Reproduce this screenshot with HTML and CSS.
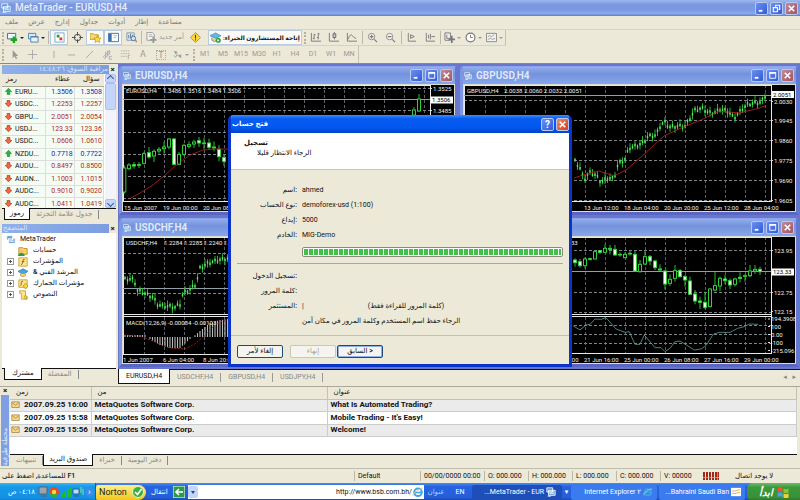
FILE: index.html
```html
<!DOCTYPE html>
<html lang="ar" dir="ltr">
<head>
<meta charset="utf-8">
<title>MetaTrader - EURUSD,H4</title>
<link rel="stylesheet" href="styles.css">
</head>
<body>
<svg class="defs" aria-hidden="true">
  <symbol id="app" viewBox="0 0 12 12"><path d="M1 1h7v5H1zM3 4h8v6H3z" fill="#4d8fd0" stroke="#fff"/><path d="M4 6h6M4 8h6M2 11h4" stroke="#fff"/></symbol>
  <symbol id="plus-chart" viewBox="0 0 12 12"><path d="M.5 1.500h9v6h-9z" fill="#eef5ff" stroke="#35658f"/><path d="M7.500 5v7M4 8.500h7" stroke="#18a818" stroke-width="2.600"/></symbol>
  <symbol id="stack" viewBox="0 0 12 12"><path d="M.5 1.500h8v6h-8z" fill="#d7e8fa" stroke="#4b7daa"/><path d="M3 5h8v6H3z" fill="#e9f3ff" stroke="#4b7daa"/><path d="M3 5.500h8" stroke="#4b7daa"/></symbol>
  <symbol id="watch" viewBox="0 0 12 12"><path d="M1 1h10v10H1z" fill="#fff" stroke="#7aa5d0"/><path d="M3 3h3v3H3z" fill="#24a32c"/><path d="M6 6h3v3H6z" fill="#d33b22"/></symbol>
  <symbol id="target" viewBox="0 0 12 12"><circle cx="6" cy="6" r="3.500" fill="none" stroke="#444"/><path d="M6 0v4M6 8v4M0 6h4M8 6h4" stroke="#444"/></symbol>
  <symbol id="star" viewBox="0 0 12 12"><path d="M0 2h4l1 1h4v5H0z" fill="#f6dd79" stroke="#c29a20"/><path d="M8 4l1.200 2.600 2.800.2-2.100 1.900.7 2.800L8 10l-2.500 1.500.6-2.800L4 6.800l2.800-.2z" fill="#ffe24a" stroke="#b98a12" stroke-width=".7"/></symbol>
  <symbol id="panel" viewBox="0 0 12 12"><path d="M.5 1.500h11v9H.5z" fill="#fff" stroke="#3d6fa8"/><path d="M1 2h3v8H1z" fill="#3d6fa8"/><path d="M6 4h4M6 6h3" stroke="#9dbbe0"/></symbol>
  <symbol id="test" viewBox="0 0 12 12"><path d="M1 1h8v8H1z" fill="#e8f0fa" stroke="#7693b4"/><path d="M3 3v4M5 2v5M7 3v3" stroke="#52708f"/><circle cx="8" cy="7" r="2.500" fill="#cfe5f8" stroke="#52708f"/><path d="M10 9l2 2" stroke="#b68330" stroke-width="1.500"/></symbol>
  <symbol id="order" viewBox="0 0 12 12"><path d="M1 .5h6l2 2V9H1z" fill="#f5f5f0" stroke="#999"/><path d="M3 3h4M3 5h4" stroke="#aaa"/><path d="M8 5v7M4.500 8.500h7" stroke="#999" stroke-width="2"/></symbol>
  <symbol id="warn" viewBox="0 0 12 12"><path d="M6 .5L11.500 6 6 11.500.5 6z" fill="#ffd73c" stroke="#c69214"/><path d="M6 3v4M6 8v1.300" stroke="#54400a" stroke-width="1.200"/></symbol>
  <symbol id="expert" viewBox="0 0 12 12"><path d="M0 4l6-3 6 3-6 3z" fill="#66b5e6" stroke="#2d7eb5" stroke-width=".7"/><path d="M2 6v3q3 3 6 0" fill="#f4cf74" stroke="#2d7eb5" stroke-width=".7"/><circle cx="9" cy="9" r="2.800" fill="#29a338"/><path d="M8 7.500v3l2.500-1.500z" fill="#fff"/></symbol>
  <symbol id="advisor" viewBox="0 0 12 12"><path d="M0 4l6-3 6 3-6 4z" fill="#4ba3e0" stroke="#2a74b4" stroke-width=".7"/><path d="M3 7v2q3 3 6 0V7" fill="#f4cf74" stroke="#a5843a" stroke-width=".7"/></symbol>
  <symbol id="bars" viewBox="0 0 12 12"><path d="M1.500 1v9H12M4.500 2v6M3 7h1.500M4.500 3H6M9 1v7M7.500 6H9M9 2h1.500" fill="none" stroke="#777"/></symbol>
  <symbol id="candle" viewBox="0 0 12 12"><path d="M1.500 1v9H12M7 0v8" fill="none" stroke="#777"/><path d="M5.500 2h3v4h-3z" fill="#ccc" stroke="#666"/></symbol>
  <symbol id="line" viewBox="0 0 12 12"><path d="M1.500 1v9H12M2 8q3-7 5-4t4 3" fill="none" stroke="#777"/></symbol>
  <symbol id="zin" viewBox="0 0 12 12"><circle cx="5" cy="5" r="3.500" fill="#f5f5f5" stroke="#888"/><path d="M3 5h4M5 3v4M8 8l3 3" stroke="#777" stroke-width="1.200"/></symbol>
  <symbol id="zout" viewBox="0 0 12 12"><circle cx="5" cy="5" r="3.500" fill="#f5f5f5" stroke="#888"/><path d="M3 5h4M8 8l3 3" stroke="#777" stroke-width="1.200"/></symbol>
  <symbol id="scroll" viewBox="0 0 12 12"><path d="M2.500 1v9H11M5 3v4l4-2z" fill="none" stroke="#777"/></symbol>
  <symbol id="shift" viewBox="0 0 12 12"><path d="M2.500 1v9H12M7 2v6M8 5h4M5 3v4" fill="none" stroke="#777"/></symbol>
  <symbol id="indic" viewBox="0 0 12 12"><path d="M1 1h6v8H1z" fill="#eee" stroke="#777"/><path d="M3 3v4h3" fill="none" stroke="#777"/><path d="M8.500 4v8M5 8h7" stroke="#777" stroke-width="1.800"/></symbol>
  <symbol id="clock" viewBox="0 0 12 12"><circle cx="6" cy="6" r="4.800" fill="#fff" stroke="#777" stroke-width="1.300"/><path d="M6 3v3h2.500" fill="none" stroke="#777"/></symbol>
  <symbol id="templ" viewBox="0 0 12 12"><path d="M.5 1.500h11v9H.5z" fill="#f2f2ee" stroke="#888"/><path d="M2 5l2-1 2 1 3-2M2 8l3-1 2 1 3-1" fill="none" stroke="#999"/></symbol>
  <symbol id="cursor" viewBox="0 0 12 12"><path d="M4 1v9l2-2 1.500 3 1.500-.7L7.500 7.500H10z" fill="#999"/></symbol>
  <symbol id="cross" viewBox="0 0 12 12"><path d="M6 1v10M1 6h10" stroke="#aaa"/></symbol>
  <symbol id="vline" viewBox="0 0 12 12"><path d="M6.500 2v8" stroke="#aaa"/></symbol>
  <symbol id="hline" viewBox="0 0 12 12"><path d="M2 6.500h8" stroke="#aaa"/></symbol>
  <symbol id="slash" viewBox="0 0 12 12"><path d="M2 10l8-8" stroke="#aaa"/></symbol>
  <symbol id="chan" viewBox="0 0 12 12"><path d="M1 9l7-7M2 11l7-7M4 3v7M6 2v6M8 1v5M8 8h3M8 8v3h3" fill="none" stroke="#aaa"/></symbol>
  <symbol id="fibo" viewBox="0 0 12 12"><path d="M1 2h10M1 5h10M1 8h7" stroke="#aaa" stroke-dasharray="1.500 1"/><path d="M9 11V7h2" fill="none" stroke="#aaa"/></symbol>
  <symbol id="arrows" viewBox="0 0 12 12"><path d="M2 2l4 1-2 3zM6 7l4-1v4z" fill="#999"/><path d="M2 7l2 2 2-4" fill="none" stroke="#999"/></symbol>
  <symbol id="up" viewBox="0 0 8 8"><path d="M4 .3L7.500 4H5.500v3.500h-3V4H.5z" fill="#26b53a" stroke="#0c7a1c" stroke-width=".6"/></symbol>
  <symbol id="down" viewBox="0 0 8 8"><path d="M4 7.700L7.700 4 5.500 3.300V.5h-3v2.800L.3 4z" fill="#f06a3e" stroke="#a92c12" stroke-width=".8"/></symbol>
  <symbol id="mail" viewBox="0 0 12 12"><path d="M1 2.500h10v7.500H1z" fill="#f5d789" stroke="#a5843a"/><path d="M1.500 3.500L6 7l4.500-3.500" fill="none" stroke="#a5843a"/></symbol>
  <symbol id="folder" viewBox="0 0 12 12"><path d="M1 2h5l1 1h4v7H1z" fill="#f8d264" stroke="#b78a1e"/><circle cx="4" cy="7" r="2" fill="#f1b882"/><path d="M0 12q0-3.500 4-3.500T8 12z" fill="#22a43a"/></symbol>
  <symbol id="func" viewBox="0 0 12 12"><path d="M1 1h10v10H1z" fill="#ffe68a" stroke="#c09a3a"/><path d="M8 3q-2-1-2 1.500T4 9.500M4.500 5.500h3" fill="none" stroke="#72581a"/></symbol>
  <symbol id="custom" viewBox="0 0 12 12"><path d="M1 1h10v9H1z" fill="#ffe68a" stroke="#c09a3a"/><path d="M6 3q-2-1-2 1.500T3 8" fill="none" stroke="#72581a"/><path d="M9 5l3 3.500L9 12 6 8.500z" fill="#ffd130" stroke="#b08010" stroke-width=".7"/></symbol>
  <symbol id="script" viewBox="0 0 12 12"><path d="M2 1h7v7h2v3H4V4H2z" fill="#ffe68a" stroke="#c09a3a"/><path d="M9 6l2 2.500L9 11 7 8.500z" fill="#ffd130" stroke="#b08010" stroke-width=".7"/></symbol>
  <symbol id="ie" viewBox="0 0 12 12"><circle cx="6" cy="6.300" r="3.800" fill="none" stroke="#3aa5ee" stroke-width="2"/><path d="M3 6.500h6.500" stroke="#3aa5ee" stroke-width="1.600"/><path d="M1 10Q0 6 11 2" fill="none" stroke="#e8cf72" stroke-width=".9"/></symbol>
  <symbol id="min" viewBox="0 0 12 12"><path d="M3 8.500h4" stroke="#fff" stroke-width="2"/></symbol>
  <symbol id="max" viewBox="0 0 12 12"><path d="M3 3.500h6.500V9H3z" fill="none" stroke="#fff"/><path d="M2.500 3h7.500" stroke="#fff" stroke-width="1.600"/></symbol>
  <symbol id="rest" viewBox="0 0 12 12"><path d="M5 4V2.500h4.500V7H8M2.500 5H7v4.500H2.500z" fill="none" stroke="#fff" stroke-width="1.200"/></symbol>
  <symbol id="close" viewBox="0 0 12 12"><path d="M3 3l6 6M9 3L3 9" stroke="#fff" stroke-width="1.700"/></symbol>
</svg>

<header class="titlebar">
  <svg class="ico10"><use href="#app"/></svg>
  <h1>MetaTrader - EURUSD,H4</h1>
  <div class="winbtns">
    <button class="wb" aria-label="Minimize"><svg><use href="#min"/></svg></button>
    <button class="wb" aria-label="Restore"><svg><use href="#rest"/></svg></button>
    <button class="wb red" aria-label="Close"><svg><use href="#close"/></svg></button>
  </div>
</header>

<nav class="menu">
  <a href="#">ملف</a><a href="#">عرض</a><a href="#">إدارج</a><a href="#">جداول</a><a href="#">أدوات</a><a href="#">إطار</a><a href="#">مساعدة</a>
</nav>

<div class="tools">
  <div class="bar">
    <i class="grip"></i>
    <button class="t drop" aria-label="New chart"><svg><use href="#plus-chart"/></svg></button>
    <button class="t drop" aria-label="Profiles"><svg><use href="#stack"/></svg></button>
    <i class="sep"></i>
    <button class="t on" aria-label="Market watch"><svg><use href="#watch"/></svg></button>
    <button class="t" aria-label="Data window"><svg><use href="#target"/></svg></button>
    <button class="t on" aria-label="Navigator"><svg><use href="#star"/></svg></button>
    <button class="t on" aria-label="Terminal"><svg><use href="#panel"/></svg></button>
    <button class="t" aria-label="Tester"><svg><use href="#test"/></svg></button>
    <i class="sep"></i>
    <button class="t text off"><svg><use href="#order"/></svg><span>أمر جديد</span></button>
    <button class="t" aria-label="Editor"><svg><use href="#warn"/></svg></button>
    <button class="t text on wide"><svg><use href="#expert"/></svg><span dir="rtl">إتاحة المستشارون الخبراء:</span></button>
    <i class="grip"></i>
    <button class="t" aria-label="Bars"><svg><use href="#bars"/></svg></button>
    <button class="t" aria-label="Candles"><svg><use href="#candle"/></svg></button>
    <button class="t" aria-label="Line"><svg><use href="#line"/></svg></button>
    <i class="sep"></i>
    <button class="t" aria-label="Zoom in"><svg><use href="#zin"/></svg></button>
    <button class="t" aria-label="Zoom out"><svg><use href="#zout"/></svg></button>
    <i class="sep"></i>
    <button class="t" aria-label="Auto scroll"><svg><use href="#scroll"/></svg></button>
    <button class="t" aria-label="Shift"><svg><use href="#shift"/></svg></button>
    <i class="sep"></i>
    <button class="t drop off" aria-label="Indicators"><svg><use href="#indic"/></svg></button>
    <button class="t drop off" aria-label="Periods"><svg><use href="#clock"/></svg></button>
    <button class="t drop off" aria-label="Templates"><svg><use href="#templ"/></svg></button>
  </div>
  <div class="bar">
    <i class="grip"></i>
    <button class="t" aria-label="Cursor"><svg><use href="#cursor"/></svg></button>
    <button class="t" aria-label="Crosshair"><svg><use href="#cross"/></svg></button>
    <i class="sep none"></i>
    <button class="t" aria-label="Vertical line"><svg><use href="#vline"/></svg></button>
    <button class="t" aria-label="Horizontal line"><svg><use href="#hline"/></svg></button>
    <button class="t" aria-label="Trend line"><svg><use href="#slash"/></svg></button>
    <button class="t" aria-label="Channel"><svg><use href="#chan"/></svg></button>
    <button class="t" aria-label="Fibonacci"><svg><use href="#fibo"/></svg></button>
    <button class="t glyph">A</button>
    <button class="t glyph"><span class="boxed">T</span></button>
    <button class="t drop off" aria-label="Arrows"><svg><use href="#arrows"/></svg></button>
    <i class="grip"></i>
    <button class="t p">M1</button><button class="t p">M5</button><button class="t p">M15</button><button class="t p">M30</button><button class="t p">H1</button><button class="t p">H4</button><button class="t p">D1</button><button class="t p">W1</button><button class="t p">MN</button>
  </div>
</div>

<main class="work">
  <aside class="side">
    <section class="panel market">
      <div class="cap"><h2 dir="rtl">مراقبة السوق: ١٤:٤٨:٢٦</h2><button aria-label="Close panel">×</button></div>
      <div class="list">
        <div class="rows">
        <table>
          <thead><tr><th>رمز</th><th>عطاء</th><th>سؤال</th></tr></thead>
          <tbody>
            <tr class="u"><td><svg><use href="#up"/></svg>EURU...</td><td>1.3506</td><td>1.3508</td></tr>
            <tr><td><svg><use href="#down"/></svg>USDC...</td><td>1.2253</td><td>1.2257</td></tr>
            <tr><td><svg><use href="#down"/></svg>GBPU...</td><td>2.0051</td><td>2.0054</td></tr>
            <tr><td><svg><use href="#down"/></svg>USDJ...</td><td>123.33</td><td>123.36</td></tr>
            <tr><td><svg><use href="#down"/></svg>USDC...</td><td>1.0606</td><td>1.0610</td></tr>
            <tr class="u"><td><svg><use href="#up"/></svg>NZDU...</td><td>0.7718</td><td>0.7722</td></tr>
            <tr><td><svg><use href="#down"/></svg>AUDU...</td><td>0.8497</td><td>0.8500</td></tr>
            <tr><td><svg><use href="#down"/></svg>AUDN...</td><td>1.1003</td><td>1.1015</td></tr>
            <tr><td><svg><use href="#down"/></svg>AUDC...</td><td>0.9010</td><td>0.9020</td></tr>
            <tr><td><svg><use href="#down"/></svg>AUDC...</td><td>1.0411</td><td>1.0419</td></tr>
          </tbody>
        </table>
        </div>
        <div class="scroll"><button class="sb up" aria-label="Scroll up"></button><span class="thumb"></span><button class="sb dn" aria-label="Scroll down"></button></div>
      </div>
      <div class="tabs"><a class="sel" href="#">رموز</a><a href="#">جدول علامة التجزئة</a></div>
    </section>
    <section class="panel nav">
      <div class="cap"><h2 dir="rtl">المتصفح</h2><button aria-label="Close panel">×</button></div>
      <ul class="tree">
        <li><svg><use href="#app"/></svg>MetaTrader</li>
        <li class="sub leaf"><i></i><svg><use href="#folder"/></svg>حسابات</li>
        <li class="sub"><i></i><svg><use href="#func"/></svg>المؤشرات</li>
        <li class="sub"><i></i><svg><use href="#advisor"/></svg><span dir="rtl">المرشد الفني &amp;</span></li>
        <li class="sub"><i></i><svg><use href="#custom"/></svg>مؤشرات الجمارك</li>
        <li class="sub"><i></i><svg><use href="#script"/></svg>النصوص</li>
      </ul>
      <div class="tabs"><a class="sel big" href="#">مشترك</a><a href="#">المفضلة</a></div>
    </section>
  </aside>

  <div class="desk">
    <div class="grid">
      <section class="win"><div class="wt"><svg class="ico8"><use href="#app"/></svg><h2>EURUSD,H4</h2><div class="winbtns"><button class="wb" aria-label="Minimize"><svg><use href="#min"/></svg></button><button class="wb" aria-label="Maximize"><svg><use href="#max"/></svg></button><button class="wb red" aria-label="Close"><svg><use href="#close"/></svg></button></div></div><svg class="chart" id="c1" viewBox="122 84 333 128"></svg></section>
      <section class="win"><div class="wt"><svg class="ico8"><use href="#app"/></svg><h2>GBPUSD,H4</h2><div class="winbtns"><button class="wb" aria-label="Minimize"><svg><use href="#min"/></svg></button><button class="wb" aria-label="Maximize"><svg><use href="#max"/></svg></button><button class="wb red" aria-label="Close"><svg><use href="#close"/></svg></button></div></div><svg class="chart" id="c2" viewBox="462 84 333 128"></svg></section>
      <section class="win"><div class="wt"><svg class="ico8"><use href="#app"/></svg><h2>USDCHF,H4</h2><div class="winbtns"><button class="wb" aria-label="Minimize"><svg><use href="#min"/></svg></button><button class="wb" aria-label="Maximize"><svg><use href="#max"/></svg></button><button class="wb red" aria-label="Close"><svg><use href="#close"/></svg></button></div></div><svg class="chart" id="c3" viewBox="122 236 333 128"></svg></section>
      <section class="win"><div class="wt"><svg class="ico8"><use href="#app"/></svg><h2>USDJPY,H4</h2><div class="winbtns"><button class="wb" aria-label="Minimize"><svg><use href="#min"/></svg></button><button class="wb" aria-label="Maximize"><svg><use href="#max"/></svg></button><button class="wb red" aria-label="Close"><svg><use href="#close"/></svg></button></div></div><svg class="chart" id="c4" viewBox="462 236 333 128"></svg></section>
    </div>
    <div class="tabs charts"><a class="sel" href="#">EURUSD,H4</a><a href="#">USDCHF,H4</a><a href="#">GBPUSD,H4</a><a href="#">USDJPY,H4</a><span class="arr">◂ ▸</span></div>
  </div>
</main>

<section class="terminal">
  <div class="strip"><button aria-label="Close terminal">×</button><h2>محطة طرفية</h2></div>
  <div class="tbody">
    <div class="mailbox">
    <table>
      <thead><tr><th class="c1">زمن</th><th class="c2">من</th><th>عنوان</th></tr></thead>
      <tbody>
        <tr><td><svg><use href="#mail"/></svg>2007.09.25 16:00</td><td>MetaQuotes Software Corp.</td><td>What Is Automated Trading?</td></tr>
        <tr><td><svg><use href="#mail"/></svg>2007.09.25 15:58</td><td>MetaQuotes Software Corp.</td><td>Mobile Trading - It's Easy!</td></tr>
        <tr><td><svg><use href="#mail"/></svg>2007.09.25 15:56</td><td>MetaQuotes Software Corp.</td><td>Welcome!</td></tr>
      </tbody>
    </table>
    </div>
    <div class="tabs"><a href="#">تنبيهات</a><a class="sel" href="#">صندوق البريد</a><a href="#">خبراء</a><a href="#">دفتر اليومية</a></div>
  </div>
</section>

<footer class="status">
  <span class="help">للمساعدة, اضغط على F1</span><span class="s1">Default</span><span class="s2">00/00/0000 00:00</span><span class="s3">O: 000.000</span><span class="s3">H: 000.000</span><span class="s3">L: 000.000</span><span class="s3">C: 000.000</span><span class="s3">V: 00000</span>
  <span class="conn"><svg viewBox="0 0 16 8"><path d="M1 0v8M4 0v8M7 0v8M10 0v8M13 0v8M15.500 0v8" stroke="#a02818" stroke-width="2"/><path d="M0 5.500h16" stroke="#e0a898" stroke-width=".7"/></svg>لا يوجد اتصال</span>
</footer>

<nav class="task">
  <div class="tray"><span dir="rtl">٠٤:١٨ ص</span>
    <svg viewBox="0 0 46 12"><path d="M1 1h8v7H1zM3 10h6" fill="#9aa4ac" stroke="#5a6268"/><circle cx="16" cy="6" r="5" fill="#e84a28"/><path d="M16 6L11 8a5 5 0 0 0 9 1z" fill="#3aa83a"/><circle cx="16" cy="6" r="2.200" fill="#f6d84a"/><path d="M24 11V8M27 11V6M30 11V3M32.500 11V1" stroke="#1fbf2a" stroke-width="2"/><path d="M35 3h6v5h-6zM36 10h5" fill="#bfe0fa" stroke="#2a5c9c"/><path d="M43 1v6M45 3v6" stroke="#7fe88a"/></svg>
    <button class="chev" aria-label="Hide icons">›</button>
  </div>
  <button class="norton">Norton<svg viewBox="0 0 12 12"><circle cx="6" cy="6" r="5.500" fill="#3fae3c" stroke="#e6f3c8"/><path d="M3 6l2.500 2.500L9.500 3" fill="none" stroke="#fff" stroke-width="1.600"/></svg></button>
  <button class="go">انتقال<svg viewBox="0 0 12 12"><path d="M0 0h12v12H0z" fill="#2c9c46" stroke="#fff"/><path d="M10 6H3M6 3L3 6l3 3" fill="none" stroke="#fff" stroke-width="1.600"/></svg></button>
  <div class="addr"><button aria-label="Show addresses"></button><input aria-label="عنوان" value="http://www.bsb.com.bh/"><svg><use href="#ie"/></svg></div>
  <span class="albl">عنوان</span>
  <span class="lang">EN</span>
  <button class="tb cur"><span>...MetaTrader - EUR</span><svg><use href="#app"/></svg></button>
  <span class="more">▾</span>
  <button class="tb"><span>Internet Explorer ٢</span><svg><use href="#ie"/></svg></button>
  <button class="tb"><span>...Bahraini Saudi Ban</span><svg viewBox="0 0 12 12"><path d="M0 1h12v10H0z" fill="#fff"/><path d="M1 5q5 0 10-2M1 8q5 0 10-2" fill="none" stroke="#e6a53c"/></svg></button>
  <button class="start">ابدأ<svg viewBox="0 0 12 12"><path d="M1 2q2-1.500 4.500 0v4Q3 4.500 1 6z" fill="#f0582a"/><path d="M6.500 2.500q2.500 1.500 5 0v4q-2.500 1.500-5 0z" fill="#86c440"/><path d="M.5 7q2.500-1.500 5 0v4q-2.500-1.500-5 0z" fill="#4f9cf0"/><path d="M6.500 7.500q2.500 1.500 5 0v4q-2.500 1.500-5 0z" fill="#fbd02e"/></svg></button>
</nav>

<div class="dialog" role="dialog" aria-labelledby="dt">
  <div class="dcap"><h2 id="dt">فتح حساب</h2><button class="wb" aria-label="Help">?</button><button class="wb hot" aria-label="Close"><svg><use href="#close"/></svg></button></div>
  <div class="dhead"><h3>تسجيل</h3><p>الرجاء الانتظار قليلا</p></div>
  <dl class="info">
    <dt>اسم:</dt><dd>ahmed</dd>
    <dt>نوع الحساب:</dt><dd>demoforex-usd (1:100)</dd>
    <dt>إيداع:</dt><dd>5000</dd>
    <dt>الخادم:</dt><dd>MIG-Demo</dd>
  </dl>
  <div class="prog" role="progressbar" aria-label="Progress"><span></span></div>
  <dl class="info low">
    <dt>تسجيل الدخول:</dt><dd></dd>
    <dt>كلمة المرور:</dt><dd></dd>
    <dt>المستثمر:</dt><dd class="split"><span>|</span><span>(كلمة المرور للقراءة فقط)</span></dd>
    <dt></dt><dd>الرجاء حفظ اسم المستخدم وكلمة المرور في مكان آمن</dd>
  </dl>
  <div class="dbtns"><button>إلغاء لأمر</button><button disabled>إنهاء</button><button class="def">السابق &gt;</button></div>
</div>
<script src="charts.js"></script>
</body>
</html>
```
FILE: styles.css
```css
* { box-sizing: border-box; }
body {
  margin: 0; min-height: 100vh; display: flex; flex-direction: column; position: relative;
  background: #ece9d8; color: #111; font: 7px/9px Roboto, "DejaVu Sans", sans-serif; overflow: hidden;
}
h1, h2, h3, p, ul, dl, dd { margin: 0; padding: 0; font: inherit; }
button, input { font: inherit; color: inherit; margin: 0; padding: 0; border: 0; background: none; }
a { color: inherit; text-decoration: none; }
svg { display: block; flex: none; width: 12px; height: 12px; }
.defs { position: absolute; width: 0; height: 0; }

.titlebar { height: 16px; display: flex; align-items: center; gap: 4px; padding: 0 2px 0 1px; background: linear-gradient(#9db9ee, #7a96df 30%, #7b99e1 60%, #86a9ec 85%, #5f79cf); color: #e4ecfb; }
.titlebar h1 { flex: 1; font-size: 10px; line-height: 14px; font-weight: 500; }
.titlebar .ico10 { width: 10px; height: 10px; }
.winbtns { display: flex; gap: 2px; }
.wb { width: 13px; height: 13px; border: 1px solid #b9c8f3; border-radius: 2px; background: linear-gradient(135deg, #6d8ff0, #2f5bd6); display: flex; align-items: center; justify-content: center; color: #fff; }
.wb svg { width: 11px; height: 11px; }
.wb.red { background: linear-gradient(135deg, #c08a98, #a5525e); }

.menu { height: 14px; display: flex; align-items: center; gap: 10px; padding: 0 5px; color: #777; border-bottom: 1px solid #d8d5c8; }
.tools { height: 34px; border-bottom: 1px solid #8d8a7c; }
.bar { display: flex; align-items: center; width: max-content; height: 16px; border-right: 1px solid #c5c2b2; border-bottom: 1px solid #d6d3c4; }
.bar + .bar { height: 17px; border-bottom: 0; }
.grip { width: 2px; height: 12px; margin: 0 1px 0 2px; border-left: 2px dotted #b5b2a2; }
.sep { width: 1px; height: 13px; margin: 0 1px; background: #bbb8a8; }
.sep.none { background: none; }
.t { width: 18px; height: 15px; display: flex; align-items: center; justify-content: center; gap: 2px; color: #999; }
.t svg { width: 11px; height: 11px; }
.t.on { background: #fbfaf6; border: 1px solid #b9cbe0; }
.t.drop { width: 21px; }
.t.drop::after { content: ""; border: 2px solid transparent; border-top-color: #222; border-bottom: 0; }
.t.drop.off::after { border-top-color: #999; }
.t.text { width: auto; padding: 0 3px; }
.t.text.wide { color: #111; font-weight: 700; font-size: 6px; width: 94px; margin-left: 3px; white-space: nowrap; }
.t.glyph { font-size: 9px; }
.boxed { border: 1px dotted #aaa; line-height: 8px; padding: 0 1px; }

.work { flex: none; display: flex; }
.side { width: 118px; flex: none; display: flex; flex-direction: column; gap: 5px; padding: 1px 2px 0; }
.cap { display: flex; height: 9px; }
.cap h2 { width: 107px; padding: 0 1px; background: linear-gradient(90deg, #8fb0ea, #7c9ee0); color: #dbe6fa; text-align: right; overflow: hidden; white-space: nowrap; line-height: 9px; }
.nav .cap h2 { text-align: left; direction: ltr; }
.cap button { width: 7px; font-weight: 700; font-size: 8px; line-height: 8px; }
.market .list { height: 134px; display: flex; background: #fff; overflow: hidden; }
.rows { flex: 1; overflow: hidden; }
.market table { width: 102px; border-collapse: collapse; table-layout: fixed; height: 137px; }
.market th { height: 12px; padding: 0 4px; font-weight: 500; background: #ece9d8; border-bottom: 1px solid #aca899; text-align: right; }
.market th:first-child { width: 43px; text-align: left; }
.market td { padding: 0 1px 0 0; border: 1px solid #ddd; border-left: 0; background: #f4fcf4; color: #b02828; text-align: right; }
.market td:first-child { color: #111; text-align: left; white-space: nowrap; }
.market .u td + td { color: #1c1cb8; }
.market td svg { display: inline-block; width: 7px; height: 7px; margin: 0 3px; vertical-align: -1px; }
.scroll { width: 11px; background: #f3f3fb; display: flex; flex-direction: column; }
.sb { height: 9px; border-radius: 2px; background: #c4d5fb; border: 1px solid #aabff0; display: flex; align-items: center; justify-content: center; }
.sb::after { content: ""; width: 4px; height: 4px; border: solid #3b568c; border-width: 1px 0 0 1px; transform: rotate(45deg); }
.sb.dn::after { transform: rotate(225deg); }
.sb.dn { margin-top: auto; }
.thumb { height: 27px; background: #c4d5fb; border: 1px solid #aabff0; border-radius: 2px; }
.tabs { display: flex; height: 11px; border-top: 1px solid #111; padding-left: 2px; color: #888; line-height: 9px; white-space: nowrap; }
.tabs a { padding: 0 6px; align-self: center; border-right: 1px solid #888; }
.tabs .sel { background: #fff; color: #111; border: 1px solid #111; border-top: 0; align-self: flex-start; margin-top: -1px; padding: 1px 5px; }
.tabs .sel.big { padding: 1px 7px; }
.tree { list-style: none; height: 135px; background: #fff; padding: 1px 4px; font-weight: 500; }
.tree li { display: flex; align-items: center; gap: 4px; height: 11px; }
.tree li svg { width: 10px; height: 10px; }
.tree .sub { padding-left: 2px; gap: 5px; }
.tree li:first-child { font-weight: 400; }
.tree i { width: 5px; height: 5px; background: linear-gradient(#555, #555) center / 3px 1px no-repeat, linear-gradient(#555, #555) center / 1px 3px no-repeat; outline: 1px solid #999; }
.tree .leaf i { visibility: hidden; }

.desk { flex: 1; min-width: 0; background: #6a76cc; display: flex; flex-direction: column; }
.grid { display: grid; grid-template-columns: 1fr 1fr; gap: 3px 2px; padding: 2px 1px; }
.win { border: 3px solid #6f8bde; border-top-width: 1px; border-color: #8ba4ea #6478cf #5a66c4 #7d95e2; border-radius: 4px 4px 0 0; background: #7b98e2; min-width: 0; }
.wt { display: flex; align-items: center; height: 17px; gap: 4px; padding: 0 2px 0 1px; background: linear-gradient(#93aeec, #7592dd 40%, #85a7eb); color: #dfe8fb; }
.wt h2 { flex: 1; font-size: 10px; line-height: 14px; font-weight: 700; }
.ico8 { width: 8px; height: 8px; }
.chart { width: 100%; height: auto; background: #000; outline: 1px solid #dcdcd0; outline-offset: -1px; }
.chart text { font: 6px Roboto, sans-serif; fill: #f2f2f2; }
.tabs.charts { height: 15px; border-top: 1px solid #111; background: #ece9d8; padding-left: 0; }
.charts a { padding: 0 7px; border-right-color: #999; }
.charts .sel { padding: 3px 7px 2px; }
.arr { margin-left: auto; padding-right: 4px; word-spacing: 4px; align-self: center; }

.terminal { height: 83px; display: flex; margin-top: 2px; border-top: 1px solid #aca899; border-bottom: 1px solid #c0bdae; padding-bottom: 2px; }
.strip { width: 10px; display: flex; flex-direction: column; align-items: center; padding: 0 1px; }
.strip button { font-weight: 700; font-size: 8px; line-height: 8px; }
.strip h2 { flex: 1; width: 8px; background: #7f9fe2; color: #dbe6fa; writing-mode: vertical-rl; transform: rotate(180deg); line-height: 8px; white-space: nowrap; overflow: hidden; }
.tbody { flex: 1; display: flex; flex-direction: column; padding-right: 3px; min-width: 0; }
.mailbox { flex: 1; background: #fff; }
.mailbox table { width: 100%; height: 50px; border-collapse: collapse; table-layout: fixed; }
.mailbox th { height: 12px; padding: 0 6px; text-align: left; font-weight: 500; background: #ece9d8; border: 1px solid #c5c2b2; border-left: 0; border-top: 0; }
.c1 { width: 81px; } .c2 { width: 236px; }
.mailbox td { height: 12px; padding: 0 3px; font: 700 8px/10px Roboto, sans-serif; border: 1px solid #ccc; border-width: 0 1px 1px 0; white-space: nowrap; }
.mailbox tr:nth-child(odd) td { background: #ebebeb; }
.mailbox td svg { display: inline-block; width: 9px; height: 9px; margin: 0 4px 0 -2px; vertical-align: -2px; }
.terminal .tabs { height: 12px; padding-left: 0; }

.status { height: 14px; display: flex; align-items: center; white-space: nowrap; }
.status span { padding: 0 3px; border-left: 1px solid #bbb8a8; line-height: 10px; }
.status .help { width: 354px; border: 0; padding: 0 2px; font-weight: 500; }
.s1 { width: 66px; } .s2 { width: 64px; } .s3 { width: 44px; }
.status .s3:nth-of-type(8) { width: 40px; }
.status .conn { border: 0; display: flex; align-items: center; gap: 16px; font-weight: 500; }
.conn svg { width: 16px; height: 8px; }

.task { height: 18px; margin-top: auto; display: flex; align-items: center; color: #fff; white-space: nowrap; background: linear-gradient(#4a8cf0, #2663e0 20%, #245edb 80%, #1941a5); }
.tray { width: 96px; height: 100%; display: flex; align-items: center; gap: 3px; padding-left: 8px; background: linear-gradient(#3fb4f4, #169ae8 20%, #1290e4 85%, #0c6cc0); border-right: 1px solid #0d58b8; }
.tray svg { width: 46px; height: 12px; }
.chev { width: 9px; height: 9px; border-radius: 50%; background: #3b8bee; line-height: 7px; font-size: 9px; margin-left: -2px; flex: none; }
.norton { width: 50px; height: 15px; display: flex; align-items: center; justify-content: space-between; padding: 0 2px 0 3px; border-radius: 2px 8px 8px 2px; background: linear-gradient(#fff088, #f2c61c); color: #222; font-size: 9px; }
.go { margin-left: 5px; width: 34px; display: flex; align-items: center; justify-content: space-between; }
.addr { flex: 1; height: 14px; margin-left: 3px; background: #fff; color: #111; display: flex; align-items: center; }
.addr button { width: 10px; height: 12px; background: #c4d5fb; border-radius: 2px; display: flex; align-items: center; justify-content: center; }
.addr button::after { content: ""; border: 2px solid transparent; border-top: 3px solid #2b467c; border-bottom: 0; }
.addr input { flex: 1; min-width: 0; text-align: right; outline: 0; }
.albl { width: 24px; text-align: center; color: #b9cdf5; }
.lang { width: 24px; text-align: center; }
.tb { width: 86px; height: 15px; display: flex; align-items: center; justify-content: flex-end; gap: 2px; padding: 0 4px; margin-right: 2px; background: #3b7bf0; border-radius: 2px; }
.tb svg { width: 10px; height: 10px; }
.tb.cur { width: 90px; background: #1e4fb8; padding-right: 6px; margin: 0; }
.more { width: 9px; text-align: center; }
.start { width: 53px; height: 100%; display: flex; align-items: center; justify-content: center; gap: 4px; border-radius: 6px 0 0 6px; background: linear-gradient(#6cbc6c, #3c983c 25%, #379137 80%, #2a6e2a); font-size: 10px; font-style: italic; font-weight: 700; }

.dialog { position: absolute; top: 115px; left: 0; right: 0; margin: auto; width: 344px; background: #ece9d8; border: solid #0a35c8; border-width: 0 3px 3px; border-radius: 5px 5px 0 0; overflow: hidden; }
.dcap { height: 18px; display: flex; align-items: center; gap: 2px; margin: 0 -3px; padding: 0 3px 0 4px; background: linear-gradient(#3d8cff, #0a5cf0 20%, #0058ee 70%, #0044cc); color: #fff; }
.dcap h2 { flex: 1; font-weight: 700; }
.dcap .wb { font-size: 10px; font-weight: 700; }
.dcap .hot { background: linear-gradient(135deg, #f08a68, #d0401c); }
.dhead { height: 37px; padding: 6px 0 0 13px; background: #fff; border-bottom: 1px solid #c9c6b8; }
.dhead h3 { font-weight: 700; line-height: 9px; }
.dhead p { padding-left: 13px; line-height: 10px; font-weight: 500; }
.info { display: grid; grid-template-columns: 66px 1fr; column-gap: 5px; grid-auto-rows: 15px; align-items: center; padding-top: 13px; }
.info dt { text-align: right; font-weight: 500; white-space: nowrap; }
.info dd { white-space: nowrap; }
.split { display: flex; gap: 64px; }
.prog { height: 10px; margin: 4px 6px 0 71px; border: 1px solid #8a8a80; border-radius: 2px; background: #fff; padding: 1px; }
.prog span { display: block; height: 6px; background: repeating-linear-gradient(90deg, #42c04a 0 4px, #e8f8e8 4px 5px); }
.low { margin: 6px 6px 0; border-top: 1px solid #aca899; padding: 5px 0 6px; grid-template-columns: 60px 1fr; }
.dbtns { display: flex; padding: 9px 6px 6px; border-top: 1px solid #c5c2b2; }
.dbtns button { width: 46px; height: 13px; background: #f5f4ee; border: 1px solid #1c4a80; border-radius: 2px; font-weight: 500; line-height: 9px; }
.dbtns button:disabled { margin: 0 1px 0 7px; border-color: #c9c7ba; color: #a8a697; }
.dbtns .def { box-shadow: inset 0 0 0 1px #8fb0ea; }
```
FILE: charts.js
```js
const NS = 'http://www.w3.org/2000/svg';

function pen(id) {
  const root = document.getElementById(id);
  const add = (name, attrs, text) => {
    const el = document.createElementNS(NS, name);
    for (const key in attrs) el.setAttribute(key, attrs[key]);
    if (text) el.textContent = text;
    root.appendChild(el);
    return el;
  };
  return {
    line: (x1, y1, x2, y2, stroke, extra) => add('line', { x1, y1, x2, y2, stroke, ...extra }),
    rect: (x, y, width, height, fill, stroke) => add('rect', { x, y, width, height, fill, stroke: stroke || 'none' }),
    path: (pts, stroke, extra) => add('polyline', { points: pts.map(p => p.join(',')).join(' '), fill: 'none', stroke, 'stroke-width': 0.8, ...extra }),
    text: (x, y, s, fill) => { const t = add('text', { x, y }, s); if (fill) t.style.fill = fill; }
  };
}

const DASH = { 'stroke-dasharray': '3 2', 'stroke-width': 1 };
const GRID = '#585f66';

function frame(p, left, top, bottom, split, xs, ys) {
  const right = left + 307;
  xs.forEach(x => p.line(x + .5, top, x + .5, bottom, GRID, DASH));
  ys.forEach(y => p.line(left, y + .5, right, y + .5, '#7d858a', DASH));
  p.rect(left + .5, top + .5, right - left, bottom - top, 'none', '#e8e8e8');
  if (split) {
    p.line(left, split + .5, right, split + .5, '#e8e8e8');
    p.line(left, split + 2.5, right, split + 2.5, '#e8e8e8');
  }
}

function range(a, b, step) {
  const out = [];
  for (let v = a; v <= b; v += step) out.push(v);
  return out;
}

function at(pts, x) {
  for (let i = 1; i < pts.length; i++) {
    if (x <= pts[i][0]) {
      const [a, b] = [pts[i - 1], pts[i]];
      return a[1] + (b[1] - a[1]) * (x - a[0]) / (b[0] - a[0]);
    }
  }
  return pts[pts.length - 1][1];
}

function thinBars(p, pts) {
  let i = 0;
  for (let x = pts[0][0]; x <= pts[pts.length - 1][0]; x += 2.5, i++) {
    const y = at(pts, x) + (i * 5 % 3 - 1) * 1.2;
    const up = 2 + (i * 7 % 5) * .9, dn = 2 + (i * 11 % 7) * .6;
    p.line(x, y - up, x, y + dn, '#2fc23a', { 'stroke-width': .9 });
    p.line(x, y - 1, x, y + 1.5, '#58e862', { 'stroke-width': 1.4 });
  }
}

function candle(p, x, hi, lo, a, b, full) {
  p.line(x, hi, x, lo, '#30d038', { 'stroke-width': .9 });
  const h = Math.max(b - a, .6);
  p.rect(x - 1.5, a, 3, h, full ? '#f4fff0' : '#000', '#30d038');
}

function prices(p, x, list) {
  list.forEach(([y, s]) => { p.line(x - 3, y, x - 1, y, '#ddd'); p.text(x, y + 2, s); });
}

function tag(p, x, y, s) {
  p.rect(x - 1, y - 3, 22, 7, '#fff');
  p.text(x, y + 2.5, s, '#000');
}

// EURUSD
{
  const p = pen('c1');
  frame(p, 123, 85, 201, 0, range(144, 424, 20), [88, 110, 132, 154, 176, 198]);
  p.line(123, 99.5, 430, 99.5, '#8fa0a8');
  [[373,310,395,318,390,0],[387,303,325,309,320,0],[402,300,320,308,312,1],[417,300,318,308,310,1],[432,270,308,275,304,0],
   [447,255,290,272,285,1],[462,262,300,268,282,0],[477,255,275,262,267,0],[492,240,275,255,260,0],[507,228,262,231,255,0],
   [522,228,310,231,307,1],[537,270,310,277,307,0],[552,245,282,250,277,0],[567,238,260,248,253,0],[582,233,258,240,246,0],
   [597,225,255,236,243,1],[612,228,262,243,245,1],[627,230,262,243,256,1],[642,238,268,255,258,1],[657,250,298,262,284,1],[672,278,312,287,298,1]]
    .forEach(([x, h, l, a, b, f]) => candle(p, x / 3, h / 3 + 62, l / 3 + 62, a / 3 + 62, b / 3 + 62, f));
  candle(p, 414, 107, 118, 110, 115, 0);
  candle(p, 419, 94, 112, 99, 111, 0);
  p.path([[129,199],[140,193],[153,185],[164,176],[174,167],[183,160],[190,155],[203,150],[215,149],[230,149]], '#c42020');
  p.text(126, 92.5, 'EURUSD,H4');
  p.text(163, 92.5, '1.3486 1.3516 1.3484 1.3506');
  prices(p, 433, [[88.5, '1.3525'], [110.5, '1.3485']]);
  tag(p, 432, 99.5, '1.3506');
  [[124, '15 Jun 2007'], [163, '19 Jun 00:00'], [203, '20 Jun 08:00']].forEach(([x, s]) => p.text(x, 209.5, s));
}

// GBPUSD
{
  const p = pen('c2');
  frame(p, 463, 85, 201, 0, range(484, 764, 20), [100, 120, 140, 160, 180, 200]);
  p.line(463, 95.5, 770, 95.5, '#8fa0a8');
  thinBars(p, [[574,161],[579,168],[583,180],[588,172],[595,175],[600,182],[606,178],[613,178],[617,164],[624,159],[628,148],[637,145],[643,142],[647,136],[655,135],[660,124],[664,122],[668,127],[675,126],[684,126],[689,118],[694,110],[701,108],[707,112],[713,113],[719,109],[727,111],[733,118],[740,110],[747,104],[753,103],[760,102],[764,96]]);
  p.path([[573,178],[585,174],[598,171],[613,176],[625,170],[640,157],[663,136],[680,128],[700,120],[718,111],[738,113],[755,109],[764,106]], '#c42020');
  p.text(466, 92.5, 'GBPUSD,H4');
  p.text(503, 92.5, '2.0038 2.0060 2.0032 2.0051');
  prices(p, 773, [[101.5, '2.0030'], [120.5, '1.9945'], [140.5, '1.9860'], [160.5, '1.9775'], [180.5, '1.9690'], [200.5, '1.9605']]);
  tag(p, 772, 94, '2.0051');
  [[583, '13 Jun 12:00'], [623, '18 Jun 04:00'], [663, '20 Jun 20:00'], [703, '25 Jun 12:00'], [743, '28 Jun 04:00']].forEach(([x, s]) => p.text(x, 209.5, s));
}

// USDCHF
{
  const p = pen('c3');
  frame(p, 123, 237, 354, 314, range(144, 424, 20), [253, 273, 293]);
  p.line(123, 288.5, 430, 288.5, '#8fa0a8');
  thinBars(p, [[125,279],[134,279],[137,290],[144,293],[153,297],[158,305],[168,306],[175,307],[180,304],[183,293],[190,289],[196,284],[200,268],[208,263],[218,260],[228,258]]);
  const macd = [[125,335],[145,335],[150,339],[160,345],[170,348],[180,348],[190,339],[194,336],[200,331],[210,323],[220,320],[228,319]];
  for (let x = 125; x < 229; x += 2.5) p.line(x, 337, x, at(macd, x), '#b8b8b8', { 'stroke-width': 1.1 });
  p.path([[124,335],[140,336],[155,342],[170,348],[185,349],[195,344],[205,335],[215,325],[228,318]], '#d02424', { 'stroke-dasharray': '2 1.5' });
  p.text(126, 245, 'USDCHF,H4');
  p.text(164, 245, '1.2284 1.2285 1.2240 1.2253');
  p.text(126, 324.5, 'MACD(12,26,9) -0.00084 -0.00103');
  [[123, '1 Jun 2007'], [163, '6 Jun 04:00'], [203, '8 Jun 20:00']].forEach(([x, s]) => p.text(x, 361.5, s));
}

// USDJPY
{
  const p = pen('c4');
  frame(p, 463, 237, 353, 314, range(484, 764, 20), [250, 271, 292, 312, 325, 334, 343]);
  p.line(463, 271.5, 770, 271.5, '#8fa0a8');
  [[27,130,155,135,143,1],[42,132,158,140,152,1],[57,127,160,132,152,0],[72,128,137,131,133,1],[87,105,133,110,132,0],[102,105,118,107,112,1],
   [117,88,113,100,112,0],[132,90,118,100,103,1],[147,90,122,103,120,1],[162,112,125,118,120,0],[177,112,130,118,128,0],[192,108,122,115,117,1],
   [207,107,170,118,168,1],[222,135,173,148,170,0],[237,108,150,125,147,0],[252,120,150,125,138,1],[267,135,165,138,158,1],[282,148,170,162,165,1],
   [297,165,223,168,207,1],[312,178,213,193,205,0],[327,150,200,167,190,0],[342,162,188,167,185,1],[357,180,215,185,195,1],[372,185,240,198,238,1],
   [387,225,268,237,258,1],[402,245,282,258,262,1],[417,230,282,262,277,1],[432,220,277,222,275,0],[447,168,230,212,225,0],[462,185,228,190,213,0],
   [477,180,208,192,197,1],[492,190,222,197,210,1],[507,188,215,192,208,0],[522,172,202,187,190,1],[537,178,200,182,184,0],[552,150,187,168,182,0],
   [567,150,177,163,168,0],[582,155,180,163,170,1]]
    .forEach(([x, h, l, a, b, f]) => candle(p, x / 3 + 565, h / 3 + 215, l / 3 + 215, a / 3 + 215, b / 3 + 215, f));
  p.path([[22,333],[42,345],[60,330],[72,328],[87,312],[105,313],[120,308],[150,342],[177,352],[190,350],[207,388],[222,388],[235,360],[267,398],[285,398],[297,410],[312,400],[327,380],[342,378],[385,405],[405,402],[420,392],[442,357],[462,352],[492,352],[515,340],[535,335],[550,327],[577,328]]
    .map(([x, y]) => [x / 3 + 565, y / 3 + 215]), '#5fa09c');
  p.text(570, 245, '33');
  prices(p, 773, [[250.5, '123.95'], [292.5, '122.75'], [311.5, '122.15']]);
  prices(p, 770, [[319, '194.3908'], [326.5, '100'], [334.5, '0.00'], [342.5, '-100'], [350.5, '-215.096']]);
  tag(p, 772, 271.5, '123.33');
  [[543, '20 Jun 00:00'], [583, '21 Jun 16:00'], [623, '25 Jun 00:00'], [663, '26 Jun 08:00'], [703, '27 Jun 16:00'], [743, '29 Jun 00:00']].forEach(([x, s]) => p.text(x, 361.5, s));
}
```
